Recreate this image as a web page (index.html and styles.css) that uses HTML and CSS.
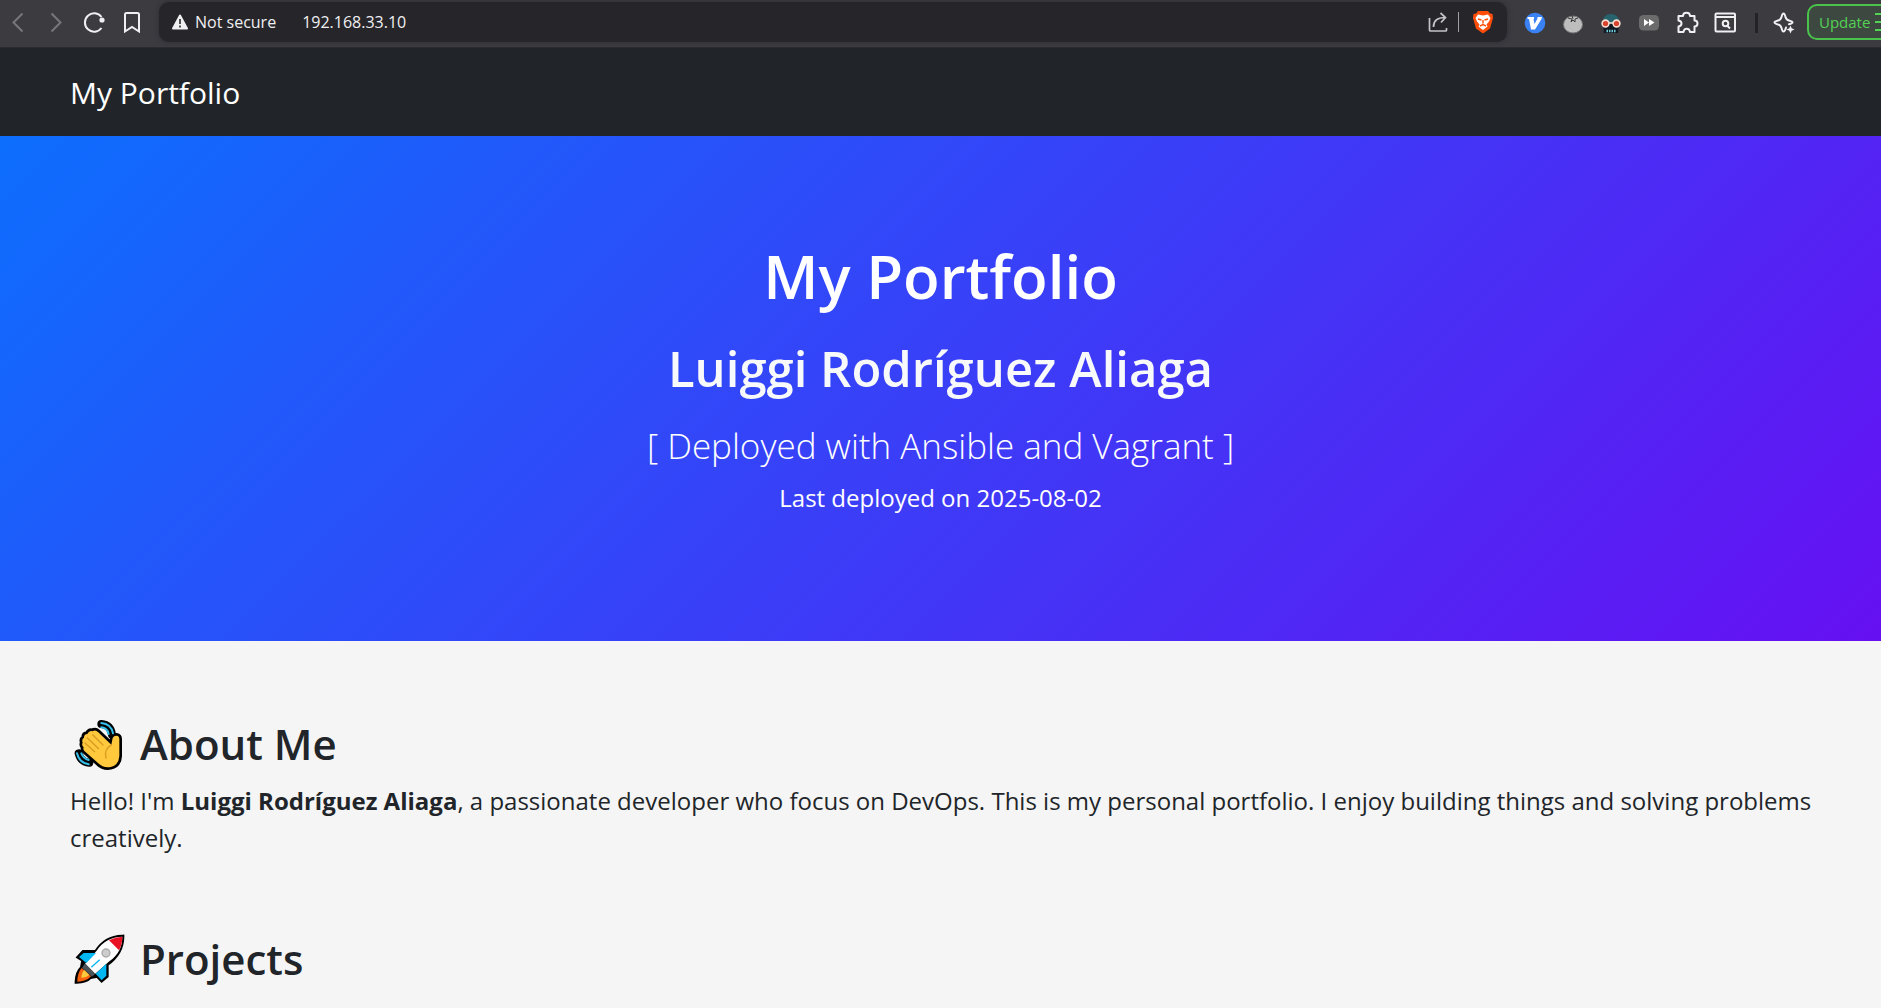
FILE: index.html
```html
<!DOCTYPE html>
<html lang="en">
<head>
<meta charset="utf-8">
<title>My Portfolio</title>
<meta name="viewport" content="width=device-width, initial-scale=1">
<link rel="stylesheet" href="styles.css">
</head>
<body>
<div class="toolbar">
  <div class="nav-buttons">
    <button class="icon-btn dim" aria-label="Back"><svg width="24" height="24" viewBox="0 0 24 24"><path d="M16.500 3.500 L7.500 12.500 L16.500 21.500"/></svg></button>
    <button class="icon-btn dim" aria-label="Forward"><svg width="24" height="24" viewBox="0 0 24 24"><path d="M7.500 3.500 L16.500 12.500 L7.500 21.500"/></svg></button>
    <button class="icon-btn" aria-label="Reload"><svg width="24" height="24" viewBox="0 0 24 24"><path d="M19.500 18 A9.200 9.200 0 1 1 19.500 7"/><circle cx="20" cy="10" r="2.600" class="fill" stroke="none"/></svg></button>
    <button class="icon-btn" aria-label="Bookmark"><svg width="24" height="24" viewBox="0 0 24 24"><path d="M6.500 3 H17.500 Q19 3 19 4.500 V21.500 L12 17 L5 21.500 V4.500 Q5 3 6.500 3 Z"/></svg></button>
  </div>
  <div class="address">
    <button class="security"><svg width="18" height="18" viewBox="0 0 18 18"><path class="fill" d="M9 2.500 L16 15.500 H2 Z" stroke-linejoin="round"/><path d="M9 6 V11 M9 12.500 V14.500" stroke="#26252a" stroke-width="1.600"/></svg>Not secure</button>
    <input class="url" type="text" aria-label="Address" value="192.168.33.10">
    <button class="icon-btn soft" aria-label="Share"><svg width="24" height="24" viewBox="0 0 24 24"><path d="M3.500 8 V20 Q3.500 21 4.500 21 H19.500 Q20.500 21 20.500 20 V18 M7.500 17 C7.500 11 11 7.500 19 7.500 M14.500 3 L19.500 7.500 L15 12.500" stroke-width="1.700"/></svg></button>
    <span class="divider light"></span>
    <button class="icon-btn" aria-label="Shields"><svg width="24" height="24" viewBox="0 0 24 24"><path fill="#ff4d0a" stroke="none" d="M7 1 H17 L19 3.500 L21.500 4 L22 8 L19 18.500 L12 23.500 L5 18.500 L2 8 L2.500 4 L5 3.500 Z"/><path fill="#fff" stroke="none" d="M7 4.500 L12 5.500 L17 4.500 L19.500 8 L18 11.500 L15.500 14.500 L16.500 16.500 L12 20 L7.500 16.500 L8.500 14.500 L6 11.500 L4.500 8 Z"/><path d="M7 9 L10.500 10 M17 9 L13.500 10 M12 10 V13.500 M9 16 L12 14.500 L15 16" stroke="#ff4d0a" stroke-width="1.400"/></svg></button>
  </div>
  <div class="extensions">
    <button class="icon-btn" aria-label="Vimium"><svg width="24" height="24" viewBox="0 0 24 24"><circle cx="12" cy="12" r="10.300" fill="#3a82f4" stroke="none"/><path fill="#fff" stroke="none" d="M4.500 6 H11 V8 H10.500 L11.500 13 L14.500 7.500 V6 H19 L18.500 8 L12 18.500 H8 L6 8 H4.500 Z"/></svg></button>
    <button class="icon-btn" aria-label="Tomato timer"><svg width="24" height="24" viewBox="0 0 24 24"><ellipse cx="12" cy="13.500" rx="9.500" ry="8.500" fill="#bdbdbd" stroke="#77757a" stroke-width="1"/><path d="M10.500 2.500 L12 8 M7 7 L11 8 L10 11 L12 9 L14 11 L14 8 L17 7" stroke="#3a3a3a" stroke-width="1"/></svg></button>
    <button class="icon-btn" aria-label="Robot"><svg width="24" height="24" viewBox="0 0 24 24"><path d="M3.500 12 Q4 3 12 3 Q20 3 20.500 12 Z" fill="#27636d" stroke="none"/><path d="M4 12 H20 L19 22 H5 Z" fill="#111922" stroke="none"/><circle cx="6.500" cy="12.500" r="3.400" fill="#d9432d" stroke="#f8ddd0" stroke-width="1.600"/><circle cx="17.500" cy="12.500" r="3.400" fill="#d9432d" stroke="#f8ddd0" stroke-width="1.600"/><path d="M10 12 H14" stroke="#f8ddd0" stroke-width="1.600"/><path d="M7.500 20 H17" stroke="#6ecbd6" stroke-width="2.400" stroke-dasharray="1.500 1"/></svg></button>
    <button class="icon-btn" aria-label="Speed"><svg width="24" height="24" viewBox="0 0 24 24"><rect x="2" y="4" width="20" height="15.500" rx="4.500" fill="#6b6b6b" stroke="none"/><path fill="#fff" stroke="none" d="M7 8 L12 11.500 L7 15 Z M12 8 L17.500 11.500 L12 15 Z"/></svg></button>
    <button class="icon-btn" aria-label="Extensions"><svg width="24" height="24" viewBox="0 0 24 24"><path stroke-linejoin="round" d="M3.500 5 H8 C8 0.500 15 0.500 15 5 H19.500 V9.500 C23.500 9.500 23.500 15.500 19.500 15.500 V21 H15 C14.500 16.500 9 16.500 8.500 21 H3.500 V15.500 C7.500 15 7.500 10 3.500 9.500 Z"/></svg></button>
    <button class="icon-btn" aria-label="Search tabs"><svg width="24" height="24" viewBox="0 0 24 24"><rect x="2.500" y="2.500" width="19.500" height="18" rx="1"/><path d="M2 6 H22 M14.500 15 L17 17.500"/><circle cx="12.500" cy="12.500" r="2.800"/></svg></button>
    <span class="divider dark"></span>
    <button class="icon-btn" aria-label="Leo"><svg width="24" height="24" viewBox="0 0 24 24"><path stroke-linejoin="round" stroke-linecap="round" d="M14 16.500 Q13 20.500 11.500 20.500 Q10.300 20.500 9.500 17 Q8.800 14.200 6 13.500 Q2.500 12.500 2.500 11.500 Q2.500 10.500 6 9.500 Q8.800 8.800 9.500 6 Q10.300 2.500 11.500 2.500 Q12.700 2.500 13.500 6 Q14.200 8.800 17 9.500 Q20.500 10.500 20.500 11.500 Q20.500 12.500 17 13.300"/><path class="fill" d="M18.500 14.500 L19.700 17.300 L22.500 18.500 L19.700 19.700 L18.500 22.500 L17.300 19.700 L14.500 18.500 L17.300 17.300 Z" stroke="none"/></svg></button>
  </div>
  <button class="update">Update<svg width="20" height="20" viewBox="0 0 20 20"><path d="M0 2 H19 M0 10 H19 M0 18 H19"/></svg></button>
</div>
<nav class="navbar"><a class="brand" href="#">My Portfolio</a></nav>
<header class="hero">
  <h1 class="hero-title">My Portfolio</h1>
  <h2 class="hero-name">Luiggi Rodríguez Aliaga</h2>
  <p class="hero-tag">[ Deployed with Ansible and Vagrant ]</p>
  <p class="hero-date">Last deployed on 2025-08-02</p>
</header>
<main class="content">
  <section class="section">
    <h2 class="heading"><svg class="emoji" viewBox="0 10 168 168" aria-hidden="true">
      <g stroke="#000" stroke-width="24" stroke-linecap="round"><path d="M94 34 Q122 36 126 66"/><path d="M26 122 Q32 148 58 150"/></g>
      <path fill="#ffc83d" stroke="#000" stroke-width="16" stroke-linejoin="round" d="M124 96 L128 76 Q132 68 140 69 Q148 70 148 80 V130 Q146 158 122 163 Q100 167 84 151 L44 116 Q38 110 41 104 Q34 98 38 90 Q34 80 42 75 Q42 64 52 64 Q58 52 68 56 Q76 50 84 58 Z"/>
      <path fill="#ffc83d" stroke="none" d="M124 96 L128 76 Q132 68 140 69 Q148 70 148 80 V130 Q146 158 122 163 Q100 167 84 151 L44 116 Q38 110 41 104 Q34 98 38 90 Q34 80 42 75 Q42 64 52 64 Q58 52 68 56 Q76 50 84 58 Z"/>
      <path stroke="#d99a22" stroke-width="4" stroke-linecap="round" d="M45 91 L74 117 M52 76 L86 108 M68 66 L99 97 M123 98 Q102 108 108 136"/>
      <path stroke="#35bfea" stroke-width="6" stroke-linecap="round" d="M94 31 Q124 34 129 62 M94 44 Q112 46 116 64 M21 122 Q28 151 56 155 M34 122 Q40 138 56 142"/>
    </svg>About Me</h2>
    <p class="lead">Hello! I'm <strong>Luiggi Rodríguez Aliaga</strong>, a passionate developer who focus on DevOps. This is my personal portfolio. I enjoy building things and solving problems creatively.</p>
  </section>
  <section class="section">
    <h2 class="heading"><svg class="emoji" viewBox="0 10 168 168" aria-hidden="true">
      <path fill="#000" stroke="#000" stroke-width="12" d="M157 27 C122 28 98 40 78 73 H40 L26 88 L40 97 L36 120 Q21 134 20 162 Q48 162 61 148 L82 144 L95 158 L110 145 V110 C145 85 157 60 157 27 Z"/>
      <path fill="#fff" stroke="none" d="M157 27 C122 28 98 42 80 69 L45 108 L75 139 L118 101 C145 82 157 58 157 27 Z"/>
      <path fill="#e81224" stroke="none" d="M157 27 Q136 28 117 38 L147 68 Q157 50 157 27 Z"/>
      <path fill="#00b7f1" stroke="none" d="M41 76 H78 L49 106 L27 88 Z M109 108 V144 L95 158 L77 138 Z"/>
      <path fill="#4b5358" stroke="none" d="M45 107 L76 138 L66 147 L36 120 Z"/>
      <path fill="#f7630c" stroke="none" d="M35 121 L63 146 Q49 162 22 162 Q22 136 35 121 Z"/>
      <path fill="#ffc83d" stroke="none" d="M43 127 L58 142 Q48 151 34 150 Q34 136 43 127 Z"/>
      <circle cx="108" cy="76" r="12" fill="#ccc" stroke="#aaa" stroke-width="4"/>
      <path stroke="#00b7f1" stroke-width="4" d="M64 119 L89 96"/>
    </svg>Projects</h2>
  </section>
</main>
</body>
</html>
```
FILE: styles.css
```css
* { box-sizing: border-box; }
body { margin: 0; background: #f5f5f5; color: #212529; font-family: "Open Sans", "Noto Sans", sans-serif; overflow-x: hidden; }
h1, h2, p { margin: 0; }
button, input { font: inherit; color: inherit; background: none; border: 0; padding: 0; }
svg { display: block; flex: none; fill: none; stroke: currentColor; stroke-width: 2; }
.fill { fill: currentColor; }
.toolbar { display: flex; align-items: center; height: 48px; background: #3c3b40; border-bottom: 1px solid #2c2b30; color: #f0f0f2; font-size: 16px; overflow: hidden; }
.nav-buttons { display: flex; gap: 14px; padding: 0 15px 4px 6px; }
.icon-btn { display: flex; flex: none; }
.dim { color: #77767b; }
.soft { color: #c4c3c8; }
.address { display: flex; flex: 1; align-items: center; height: 40px; padding: 0 12px; margin-bottom: 3px; border-radius: 10px; background: #26252a; box-shadow: 0 0 5px #2c2b30; }
.security { display: flex; align-items: center; gap: 6px; }
.url { flex: 1; min-width: 0; margin-left: 26px; }
.divider { flex: none; width: 1px; height: 20px; }
.light { background: #a0a0a4; margin: 0 12px 0 8px; }
.dark { width: 3px; background: #232227; margin-left: 4px; }
.extensions { display: flex; align-items: center; gap: 14px; padding: 0 11px 2px 16px; }
.update { display: flex; flex: none; align-items: center; gap: 5px; width: 90px; height: 36px; margin: 0 -16px 4px 0; padding-left: 10px; border: 2px solid #4ac34a; border-radius: 10px; background: #3d4841; color: #54d254; font-size: 15px; }
.navbar { display: flex; align-items: center; height: 88px; padding: 0 70px; background: #212529; }
.brand { color: #fff; text-decoration: none; font-size: 30px; }
.hero { display: flex; flex-direction: column; align-items: center; padding: 98px 70px 124px; background: linear-gradient(135deg, #0d6efd, #6610f2); color: #fff; text-align: center; }
.hero-title { font-size: 60px; line-height: 84px; font-weight: 600; }
.hero-name { margin-top: 12px; font-size: 49px; line-height: 76px; font-weight: 600; color: #f8f9fa; }
.hero-tag { margin-top: 12px; font-size: 35px; line-height: 56px; font-weight: 300; }
.hero-date { margin-top: 5px; font-size: 24px; line-height: 38px; }
.content { padding: 75px 60px 0 70px; }
.section + .section { padding-top: 75px; }
.heading { display: flex; align-items: center; gap: 14px; font-size: 42px; line-height: 56px; font-weight: 600; }
.emoji { width: 56px; height: 56px; }
.lead { font-size: 24px; line-height: 37px; margin-top: 10px; }
```
